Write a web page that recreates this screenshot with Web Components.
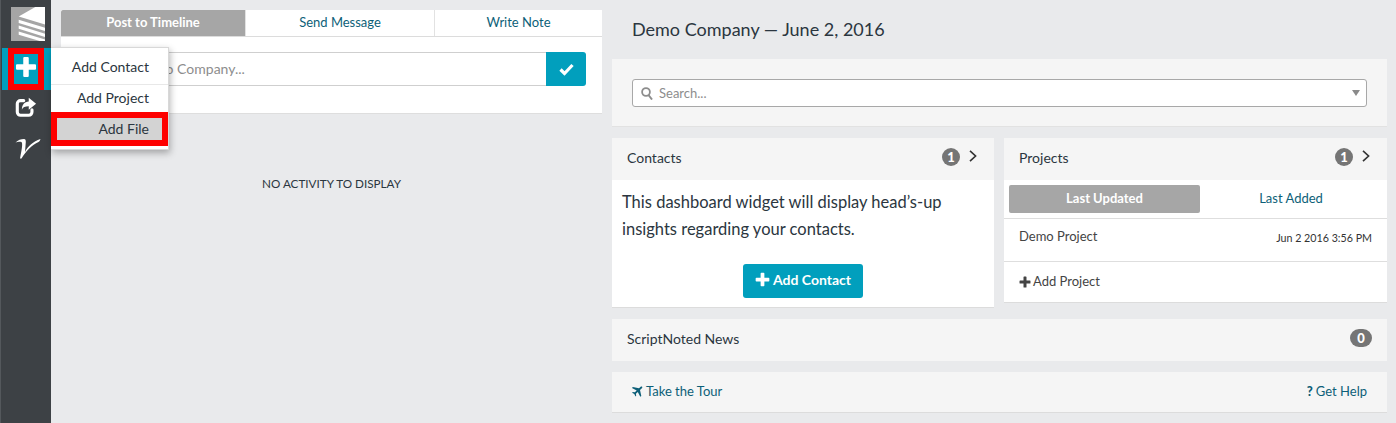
<!DOCTYPE html>
<html>
<head>
<meta charset="utf-8">
<style>
  html, body { margin: 0; height: 100%; }
  body { background: #e9eaec; font-family: Lato, "Liberation Sans", sans-serif; color: #2b3640; overflow: hidden; }
</style>
</head>
<body>
<app-shell>
  <app-sidebar slot="sidebar"></app-sidebar>
  <timeline-pane slot="left"></timeline-pane>
  <dashboard-pane slot="right"></dashboard-pane>
</app-shell>

<script>
const PLUS = `<svg viewBox="0 0 16 16" width="100%" height="100%"><path fill="currentColor" d="M6 1.500a.8.8 0 0 1 .8-.8h2.400a.8.8 0 0 1 .8.8V6h4.500a.8.8 0 0 1 .8.8v2.400a.8.8 0 0 1-.8.8H10v4.500a.8.8 0 0 1-.8.8H6.800a.8.8 0 0 1-.8-.8V10H1.500a.8.8 0 0 1-.8-.8V6.800a.8.8 0 0 1 .8-.8H6z"/></svg>`

class AppShell extends HTMLElement {
  constructor() {
    super()
    this.attachShadow({ mode: 'open' })
    this.shadowRoot.innerHTML = `
      <style>
        :host { display: grid; grid-template-columns: 51px 561px 1fr; height: 423px; }
      </style>
      <slot name="sidebar"></slot>
      <slot name="left"></slot>
      <slot name="right"></slot>
    `
  }
}

class AppSidebar extends HTMLElement {
  constructor() {
    super()
    this.attachShadow({ mode: 'open' })
    this.shadowRoot.innerHTML = `
      <style>
        :host { display: flex; flex-direction: column; align-items: center; background: #3d4145; border-left: 1px solid #54585c; box-sizing: border-box; height: 423px; padding-top: 7px; }
        .logo { width: 34px; height: 34px; display: block; margin-left: 4px; }
        .add { align-self: stretch; margin: 7px 0 0 1px; height: 42px; background: #019fbd; display: flex; justify-content: center; }
        .add div { width: 36px; height: 42px; box-sizing: border-box; border: 6px solid #fe0000; background: #019fbd; color: #fff; display: flex; align-items: center; justify-content: center; padding: 0 1px 4px 0; margin-left: -1px; }
        .add span { width: 22px; height: 22px; display: block; }
        .share { width: 22px; height: 22px; margin: 6px 0 0 0; display: block; }
        .v { width: 26px; height: 24px; margin: 18px 0 0 3px; display: block; }
      </style>
      <svg class="logo" viewBox="0 0 34 34">
        <rect width="34" height="34" fill="#a5a5a5"/>
        <path fill="#fff" d="M7.700 9.400L24.300 0H34v17.400z"/>
        <path fill="#fff" d="M7.700 12.700L34 20.700V24L7.700 16zM7.700 18.400L34 26.700V30L7.700 21.700zM7.700 24.400L34 32.400V34h-5.300L7.700 27.700z"/>
      </svg>
      <div class="add"><div><span>${PLUS}</span></div></div>
      <svg class="share" viewBox="0 0 24 24">
        <path fill="none" stroke="#fff" stroke-width="3.400" stroke-linecap="round" d="M9.500 5H6a3.500 3.500 0 0 0-3.500 3.500v9A3.500 3.500 0 0 0 6 21h9a3.500 3.500 0 0 0 3.500-3.500V15"/>
        <path fill="#fff" d="M15 2l8 6.500-8 6.500v-3.800c-4 0-6.500.8-7.500 3.800 0-5.500 3-8.800 7.500-9z"/>
      </svg>
      <svg class="v" viewBox="0 0 26 24">
        <path fill="#fff" d="M.5 6.500C3 4 6 3 9 3c1.500 0 1.800 1 1.800 3l-.8 10C13 10 18 5.500 25.500 3c-.5 1.500-1 2.500-2 3C17 9 11 15 6.500 22.500H5C6.500 15 7.500 10 7 7c-.2-1.200-1.500-1.500-3-1.200-1 .2-2.300.4-3.500.7z"/>
      </svg>
    `
  }
}

class TabBar extends HTMLElement {
  constructor() {
    super()
    this.attachShadow({ mode: 'open' })
    this.shadowRoot.innerHTML = `
      <style>
        :host { display: grid; grid-template-columns: 184px 189px 1fr; height: 27px; background: #fff; border-bottom: 1px solid #dcdcdc; box-sizing: border-box; font-size: 13px; }
        div { display: flex; align-items: center; justify-content: center; color: #0d5f78; border-left: 1px solid #e2e2e2; padding: 0 0 2px 0; }
        .on { background: #a6a6a6; color: #fff; font-weight: 700; border: 0; border-radius: 2px 0 0 0; }
      </style>
      <div class="on">Post to Timeline</div><div>Send Message</div><div>Write Note</div>
    `
  }
}

class AddMenu extends HTMLElement {
  constructor() {
    super()
    this.attachShadow({ mode: 'open' })
    this.shadowRoot.innerHTML = `
      <style>
        :host { position: absolute; left: 0; top: 47px; width: 118px; height: 103px; background: #fff; border: 1px solid #d8d8d8; border-left: 0; box-sizing: border-box; box-shadow: 1px 3px 7px rgba(0,0,0,.3); font-size: 14px; color: #2b3640; display: block; }
        div { box-sizing: border-box; text-align: right; padding-right: 19px; }
        .a { height: 37px; line-height: 38px; border-bottom: 1px solid #e8e8e8; }
        .b { height: 27px; line-height: 25px; }
        .c { height: 34px; line-height: 22px; background: #d3d3d3; border: 6px solid #fe0000; padding-right: 13px; }
      </style>
      <div class="a">Add Contact</div>
      <div class="b">Add Project</div>
      <div class="c">Add File</div>
    `
  }
}

class TimelinePane extends HTMLElement {
  constructor() {
    super()
    this.attachShadow({ mode: 'open' })
    this.shadowRoot.innerHTML = `
      <style>
        :host { display: block; position: relative; padding: 10px 10px 0; height: 423px; box-sizing: border-box; }
        .composer { background: #fff; height: 77px; padding: 15px 16px 0 16px; box-sizing: border-box; border-bottom: 1px solid #dedede; }
        .field { display: flex; height: 34px; box-sizing: border-box; }
        .input { flex: 1; border: 1px solid #cfcfcf; border-right: 0; color: #8d8d8d; font-size: 14px; line-height: 31px; padding-left: 11px; white-space: nowrap; overflow: hidden; }
        .ok { width: 40px; background: #019fbd; border-radius: 0 3px 3px 0; display: flex; align-items: center; justify-content: center; }
        .ok svg { width: 15px; height: 13px; }
        .empty { text-align: center; font-size: 11.700px; margin-top: 62px; color: #2b3640; }
      </style>
      <tab-bar></tab-bar>
      <div class="composer">
        <div class="field">
          <div class="input">Post to Demo Company...</div>
          <div class="ok"><svg viewBox="0 0 15 13"><path fill="none" stroke="#fff" stroke-width="3.200" d="M1.500 6.500l4 4L13.500 2"/></svg></div>
        </div>
      </div>
      <div class="empty">NO ACTIVITY TO DISPLAY</div>
      <add-menu></add-menu>
    `
  }
}

class CountBadge extends HTMLElement {
  constructor() {
    super()
    this.attachShadow({ mode: 'open' })
    this.shadowRoot.innerHTML = `
      <style>
        :host { display: inline-flex; align-items: center; justify-content: center; height: 18px; min-width: 18px; box-sizing: border-box; border-radius: 9px; background: #757575; color: #fff; font-size: 13px; font-weight: 900; }
      </style>
      <slot></slot>
    `
  }
}

class PanelCard extends HTMLElement {
  constructor() {
    super()
    this.attachShadow({ mode: 'open' })
    const arrow = this.hasAttribute('arrow')
    this.shadowRoot.innerHTML = `
      <style>
        :host { display: block; background: #fff; border-bottom: 1px solid #dcdcdc; box-sizing: border-box; }
        header { height: 42px; background: #f5f5f5; display: flex; align-items: center; justify-content: space-between; padding: 0 15px; font-size: 14px; color: #2b3640; }
        .title { margin-top: -4px; }
        .right { display: flex; align-items: center; gap: 9px; margin-top: -5px; }
        svg { width: 8px; height: 12px; margin: -2px 2px 0 0; }
      </style>
      <header>
        <span class="title">${this.getAttribute('title')}</span>
        <span class="right">
          <count-badge style="${arrow ? '' : 'min-width:22px'}">${this.getAttribute('count')}</count-badge>
          ${arrow ? '<svg viewBox="0 0 9 14"><path fill="none" stroke="#333" stroke-width="1.900" d="M1 1l6.500 6L1 13"/></svg>' : ''}
        </span>
      </header>
      <slot></slot>
    `
  }
}

class ContactsBody extends HTMLElement {
  constructor() {
    super()
    this.attachShadow({ mode: 'open' })
    this.shadowRoot.innerHTML = `
      <style>
        :host { display: block; padding: 9px 10px 10px; height: 127px; box-sizing: border-box; }
        p { margin: 0; font-size: 16.500px; line-height: 27px; color: #2b3640; white-space: nowrap; }
        .btn { width: 120px; height: 34px; margin: 21px auto 0; padding-bottom: 3px; box-sizing: border-box; background: #019fbd; border-radius: 3px; color: #fff; font-size: 14px; font-weight: 700; display: flex; align-items: center; justify-content: center; gap: 3px; }
        .btn span { width: 15px; height: 15px; display: block; }
      </style>
      <p>This dashboard widget will display head’s-up<br>insights regarding your contacts.</p>
      <div class="btn"><span>${PLUS}</span>Add Contact</div>
    `
  }
}

class ProjectsBody extends HTMLElement {
  constructor() {
    super()
    this.attachShadow({ mode: 'open' })
    this.shadowRoot.innerHTML = `
      <style>
        :host { display: block; font-size: 13px; color: #444; }
        .tabs { display: grid; grid-template-columns: 191px 1fr; height: 39px; padding: 5px 5px 0; box-sizing: border-box; border-bottom: 1px solid #dedede; }
        .tabs div { height: 28px; box-sizing: border-box; padding-bottom: 2px; display: flex; align-items: center; justify-content: center; color: #0d5f78; border-radius: 2px; }
        .tabs .on { background: #a6a6a6; color: #fff; font-weight: 700; }
        .row { height: 43px; box-sizing: border-box; border-bottom: 1px solid #dedede; padding: 9px 15px 0; display: flex; justify-content: space-between; }
        small { font-size: 10.700px; color: #333; padding-top: 3px; }
        .add { height: 40px; box-sizing: border-box; padding: 0 15px 3px; display: flex; align-items: center; gap: 2px; }
        .add span { width: 12px; height: 12px; display: block; }
      </style>
      <div class="tabs"><div class="on">Last Updated</div><div>Last Added</div></div>
      <div class="row"><span>Demo Project</span><small>Jun 2 2016 3:56 PM</small></div>
      <div class="add"><span>${PLUS}</span>Add Project</div>
    `
  }
}

class SearchBox extends HTMLElement {
  constructor() {
    super()
    this.attachShadow({ mode: 'open' })
    this.shadowRoot.innerHTML = `
      <style>
        :host { display: block; height: 68px; background: #f5f5f5; border-bottom: 1px solid #e2e2e2; box-sizing: border-box; padding: 20px; }
        .box { height: 28px; box-sizing: border-box; background: #fff; border: 1px solid #a8a8a8; border-radius: 3px; display: flex; align-items: center; padding: 0 6px 0 8px; color: #8d8d8d; font-size: 13px; gap: 6px; }
        svg.q { width: 12px; height: 13px; }
        span { flex: 1; }
        i { width: 0; height: 0; border: 4px solid transparent; border-top: 6px solid #8a8a8a; border-bottom: 0; }
      </style>
      <div class="box">
        <svg class="q" viewBox="0 0 12 13"><circle cx="5" cy="5" r="3.900" fill="none" stroke="#8d8d8d" stroke-width="1.800"/><path stroke="#8d8d8d" stroke-width="2" d="M7.500 8l3.500 4.500"/></svg>
        <span>Search...</span><i></i>
      </div>
    `
  }
}

class TourBar extends HTMLElement {
  constructor() {
    super()
    this.attachShadow({ mode: 'open' })
    this.shadowRoot.innerHTML = `
      <style>
        :host { display: flex; justify-content: space-between; align-items: center; height: 41px; background: #f5f5f5; border-bottom: 1px solid #dcdcdc; box-sizing: border-box; padding: 0 20px 2px; font-size: 13px; color: #0d5f78; }
        span { display: flex; align-items: center; gap: 3px; }
        svg { width: 11px; height: 11px; }
        b { font-weight: 900; }
      </style>
      <span><svg viewBox="0 0 11 11"><path fill="#0d5f78" d="M9.800.4c.6.300.7 1 .3 1.500L8 4l1.300 6-1 .8L5.800 6 3.900 7.800l.3 2-.7.700-1.200-2.500L.1 6.700l.7-.7 2 .3L4.700 4.400 0 2l.8-1 6.200 1.300L9 .4z"/></svg>Take the Tour</span>
      <span><b>?</b> Get Help</span>
    `
  }
}

class DashboardPane extends HTMLElement {
  constructor() {
    super()
    this.attachShadow({ mode: 'open' })
    this.shadowRoot.innerHTML = `
      <style>
        :host { display: block; padding: 0 9px 0 0; box-sizing: border-box; height: 423px; }
        h1 { margin: 0; height: 59px; padding: 18px 0 0 20px; box-sizing: border-box; font-size: 18px; line-height: 22px; font-weight: 400; color: #2b3640; }
        .cols { display: grid; grid-template-columns: 382px 1fr; gap: 10px; margin-top: 11px; align-items: start; height: 170px; }
        .news { display: block; margin-top: 11px; height: 42px; }
        .bar { margin-top: 11px; }
      </style>
      <h1>Demo Company — June 2, 2016</h1>
      <search-box></search-box>
      <div class="cols">
        <panel-card title="Contacts" count="1" arrow><contacts-body></contacts-body></panel-card>
        <panel-card title="Projects" count="1" arrow><projects-body></projects-body></panel-card>
      </div>
      <panel-card class="news" title="ScriptNoted News" count="0"></panel-card>
      <tour-bar class="bar"></tour-bar>
    `
  }
}

customElements.define('app-shell', AppShell)
customElements.define('app-sidebar', AppSidebar)
customElements.define('tab-bar', TabBar)
customElements.define('add-menu', AddMenu)
customElements.define('timeline-pane', TimelinePane)
customElements.define('count-badge', CountBadge)
customElements.define('panel-card', PanelCard)
customElements.define('contacts-body', ContactsBody)
customElements.define('projects-body', ProjectsBody)
customElements.define('search-box', SearchBox)
customElements.define('tour-bar', TourBar)
customElements.define('dashboard-pane', DashboardPane)
</script>
</body>
</html>
